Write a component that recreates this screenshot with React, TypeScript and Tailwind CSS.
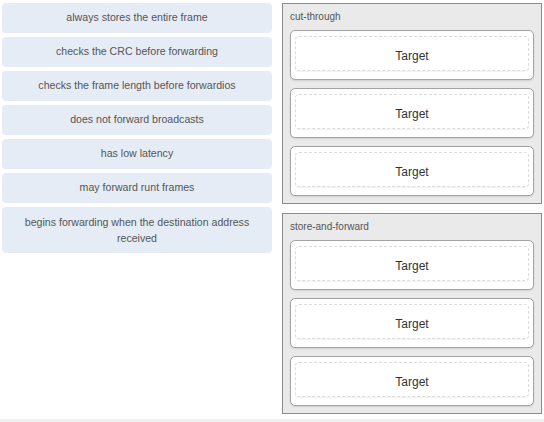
import React from "react";

const items: string[] = [
  "always stores the entire frame",
  "checks the CRC before forwarding",
  "checks the frame length before forwardios",
  "does not forward broadcasts",
  "has low latency",
  "may forward runt frames",
];

function Target() {
  return (
    <div className="h-[50px] rounded-[5px] border border-[#a3a3a3] bg-white shadow-[0_1px_2px_rgba(0,0,0,0.12)] px-[4px] pt-[5px] pb-[8px]">
      <div className="h-full rounded-[4px] border border-dashed border-[#dcdcdc] shadow-[0_1px_1px_rgba(0,0,0,0.06)] flex items-center justify-center pt-[5px] text-[12px] text-[#333]">
        Target
      </div>
    </div>
  );
}

function Box({ label }: { label: string }) {
  return (
    <div className="h-[201px] border border-[#8c8c8c] bg-[#eaeaea] px-[7px] pb-[7px] flex flex-col">
      <div className="h-[26px] pt-[7px] text-[10px] leading-[12px] text-[#555]">{label}</div>
      <div className="flex flex-col gap-[8px]">
        <Target />
        <Target />
        <Target />
      </div>
    </div>
  );
}

export default function App() {
  return (
    <div
      className="w-[544px] h-[422px] bg-white flex flex-col overflow-hidden"
      style={{ fontFamily: '"Liberation Sans", Arial, sans-serif' }}
    >
      <div className="flex pt-[3px] pl-[2px]">
        <div className="w-[270px] flex flex-col gap-[4px]">
          {items.map((t) => (
            <div
              key={t}
              className="h-[30px] rounded-[4px] bg-[#e6ecf6] flex items-center justify-center text-[10.6px] text-[#555]"
            >
              {t}
            </div>
          ))}
          <div className="h-[46px] rounded-[4px] bg-[#e6ecf6] flex items-center justify-center text-center text-[10.6px] leading-[16px] text-[#555] px-[14px]">
            begins forwarding when the destination address received
          </div>
        </div>
        <div className="ml-[10px] w-[260px] flex flex-col gap-[9px]">
          <Box label="cut-through" />
          <Box label="store-and-forward" />
        </div>
      </div>
      <div className="mt-auto h-[3px] bg-[#f0f0f0]" />
    </div>
  );
}
